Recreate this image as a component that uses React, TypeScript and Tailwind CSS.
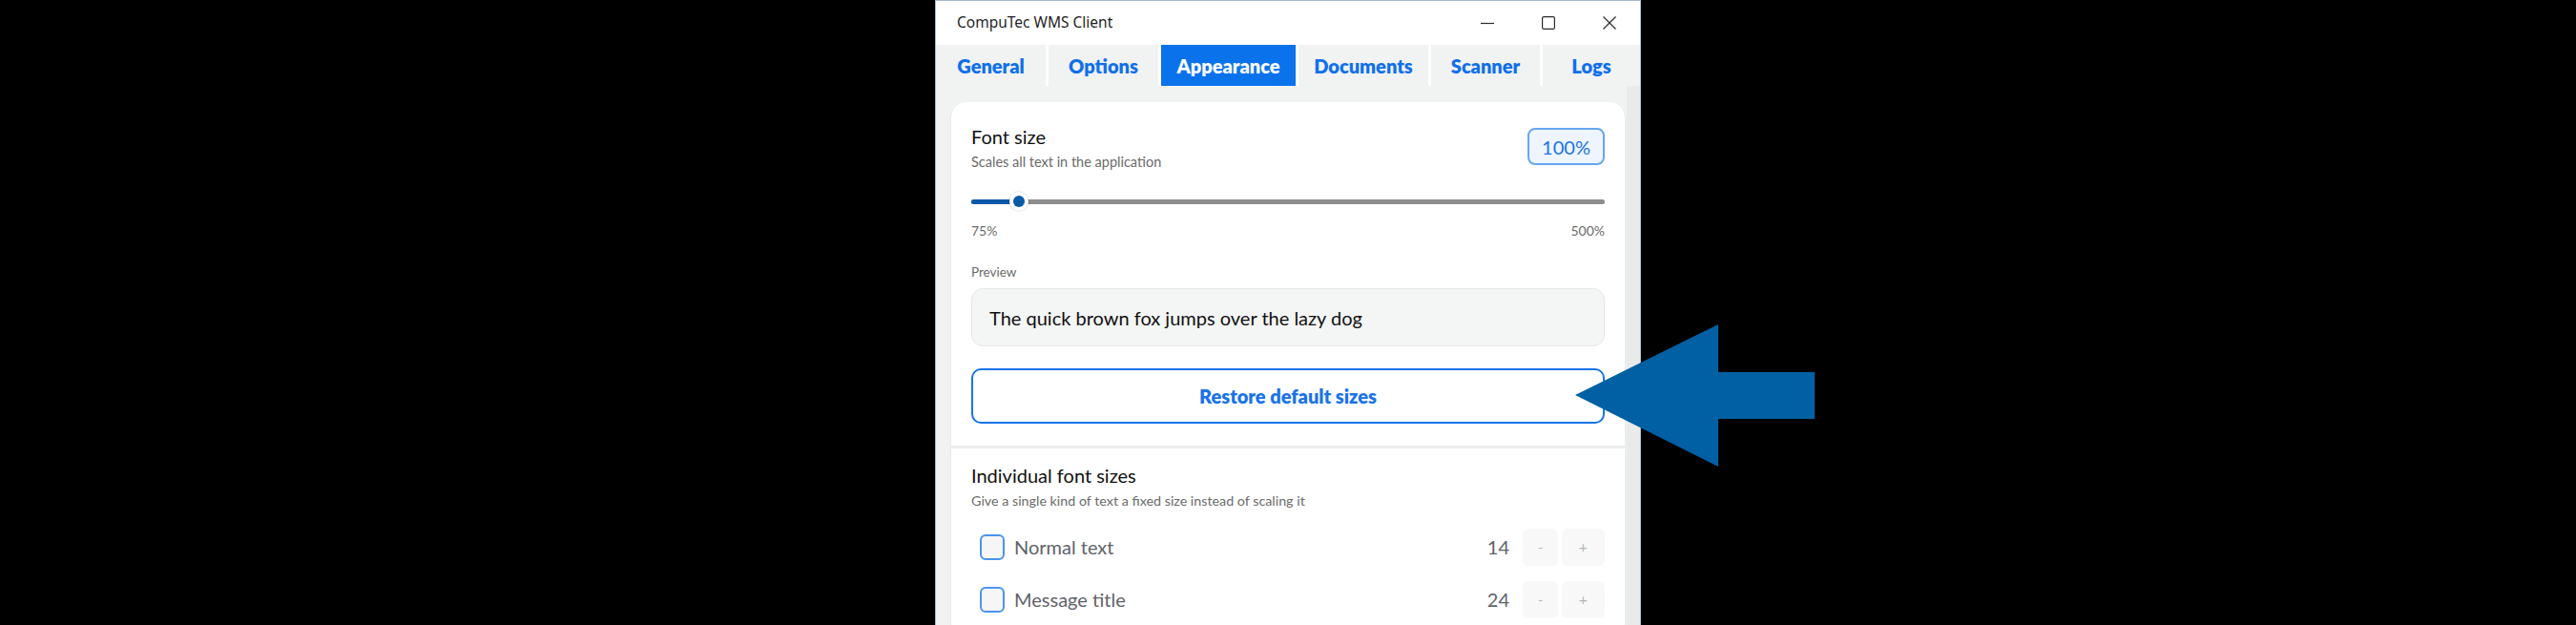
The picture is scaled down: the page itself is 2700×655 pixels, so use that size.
import React from "react";

const tabs = [
  { label: "General", w: "w-[115px]" },
  { label: "Options", w: "w-[115px]" },
  { label: "Appearance", w: "w-[141px]", active: true },
  { label: "Documents", w: "w-[136px]" },
  { label: "Scanner", w: "w-[114px]" },
  { label: "Logs", w: "flex-1" },
];

const sizeRows = [
  { label: "Normal text", value: 14 },
  { label: "Message title", value: 24 },
];

function WindowControls() {
  return (
    <div className="flex items-center h-full">
      <div className="w-[64px] h-full flex items-center justify-center">
        <svg width="14" height="14" viewBox="0 0 14 14">
          <line x1="0" y1="7.5" x2="14" y2="7.5" stroke="#2b2b2b" strokeWidth="1.2" />
        </svg>
      </div>
      <div className="w-[64px] h-full flex items-center justify-center">
        <svg width="14" height="14" viewBox="0 0 14 14">
          <rect x="0.6" y="0.6" width="12.8" height="12.8" rx="1.5" fill="none" stroke="#2b2b2b" strokeWidth="1.2" />
        </svg>
      </div>
      <div className="w-[64px] h-full flex items-center justify-center">
        <svg width="14" height="14" viewBox="0 0 14 14">
          <path d="M0.5 0.5 L13.5 13.5 M13.5 0.5 L0.5 13.5" stroke="#2b2b2b" strokeWidth="1.2" />
        </svg>
      </div>
    </div>
  );
}

function Slider() {
  return (
    <div className="relative h-[20px] flex items-center">
      <div className="absolute left-0 right-0 h-[5px] rounded-full bg-[#8c8c8c]" />
      <div className="absolute left-0 w-[42px] h-[5px] rounded-full bg-[#0b59a6]" />
      <div className="absolute left-[40px] w-[20px] h-[20px] rounded-full bg-white shadow-[0_0_2px_rgba(0,0,0,0.25)] flex items-center justify-center">
        <div className="w-[12px] h-[12px] rounded-full bg-[#0b59a6]" />
      </div>
    </div>
  );
}

export default function App() {
  return (
    <div className="w-full h-[655px] bg-black flex justify-center overflow-hidden font-['Lato','Noto_Sans',sans-serif]">
      <div className="relative w-[740px] h-[700px] border-x border-t border-[#a9bccc] bg-white flex flex-col">
        {/* title bar */}
        <div className="h-[46px] flex items-center justify-between pl-[22px] shrink-0">
          <span className="text-[15.5px] text-[#1f1f1f] font-['Noto_Sans',sans-serif]">CompuTec WMS Client</span>
          <WindowControls />
        </div>

        {/* tab strip */}
        <div className="h-[43px] flex gap-[3px] shrink-0">
          {tabs.map((t) => (
            <div
              key={t.label}
              className={`${t.w} h-full flex items-center justify-center text-[20px] font-extrabold ${
                t.active ? "bg-[#0a73eb] text-white" : "bg-[#f1f2f2] text-[#0f70ea]"
              }`}
            >
              {t.label}
            </div>
          ))}
        </div>

        {/* content */}
        <div className="flex-1 flex bg-[#f1f2f2]">
          <div className="flex-1 pl-[16px] pr-[2px] pt-[17px]">
            <div className="bg-white rounded-[16px] shadow-[0_1px_3px_rgba(0,0,0,0.08)]">
              {/* global scale section */}
              <div className="px-[21px] pt-[23px] pb-[23px] border-b-[3px] border-[#ececec]">
                <div className="flex justify-between items-start">
                  <div>
                    <div className="text-[20px] leading-[26px] text-[#111]">Font size</div>
                    <div className="text-[14.5px] leading-[18px] mt-[5px] text-[#6b6b6b]">Scales all text in the application</div>
                  </div>
                  <div className="mt-[4px] w-[81px] h-[39px] rounded-[8px] border-2 border-[#66a6f2] bg-[#eef5ff] flex items-center justify-center text-[20px] text-[#1a73e8]">
                    100%
                  </div>
                </div>
                <div className="mt-[22px]">
                  <Slider />
                </div>
                <div className="mt-[12px] flex justify-between text-[14px] leading-[18px] text-[#6b6b6b]">
                  <span>75%</span>
                  <span>500%</span>
                </div>
                <div className="mt-[25px] text-[13.5px] leading-[18px] text-[#6b6b6b]">Preview</div>
                <div className="mt-[8px] h-[61px] rounded-[12px] bg-[#f4f5f5] border border-[#e6e8e8] flex items-center pl-[18px] text-[20px] text-[#111]">
                  The quick brown fox jumps over the lazy dog
                </div>
                <div className="mt-[23px] h-[58px] rounded-[10px] border-2 border-[#1a73e8] flex items-center justify-center text-[20px] font-extrabold text-[#1a73e8]">
                  Restore default sizes
                </div>
              </div>

              {/* per-kind overrides */}
              <div className="px-[21px] pt-[15px] pb-[20px]">
                <div className="text-[20px] leading-[26px] text-[#111]">Individual font sizes</div>
                <div className="text-[14.3px] leading-[18px] mt-[5px] text-[#6b6b6b]">
                  Give a single kind of text a fixed size instead of scaling it
                </div>
                <div className="mt-[19px] flex flex-col gap-[15px]">
                  {sizeRows.map((r) => (
                    <div key={r.label} className="h-[40px] flex items-center">
                      <div className="ml-[9px] w-[26px] h-[27px] rounded-[6px] border-2 border-[#4a94ee] bg-[#f6f6f6]" />
                      <span className="ml-[10px] text-[20px] text-[#5f6369]">{r.label}</span>
                      <span className="ml-auto text-[20px] text-[#5f6369]">{r.value}</span>
                      <div className="ml-[14px] w-[37px] h-[39px] rounded-[6px] bg-[#f8f8f8] flex items-center justify-center text-[14px] text-[#b5b5b5]">
                        -
                      </div>
                      <div className="ml-[4px] w-[45px] h-[39px] rounded-[6px] bg-[#f8f8f8] flex items-center justify-center text-[16px] text-[#b5b5b5]">
                        +
                      </div>
                    </div>
                  ))}
                </div>
              </div>
            </div>
          </div>
          {/* scrollbar track */}
          <div className="w-[14px] bg-[#e9ebeb]" />
        </div>

        {/* pointer callout */}
        <svg
          className="absolute left-[670px] top-[339px]"
          width="252"
          height="150"
          viewBox="0 0 252 150"
        >
          <polygon points="0,74 150,0 150,50 251,50 251,99 150,99 150,149" fill="#0060a3" />
        </svg>
      </div>
    </div>
  );
}
